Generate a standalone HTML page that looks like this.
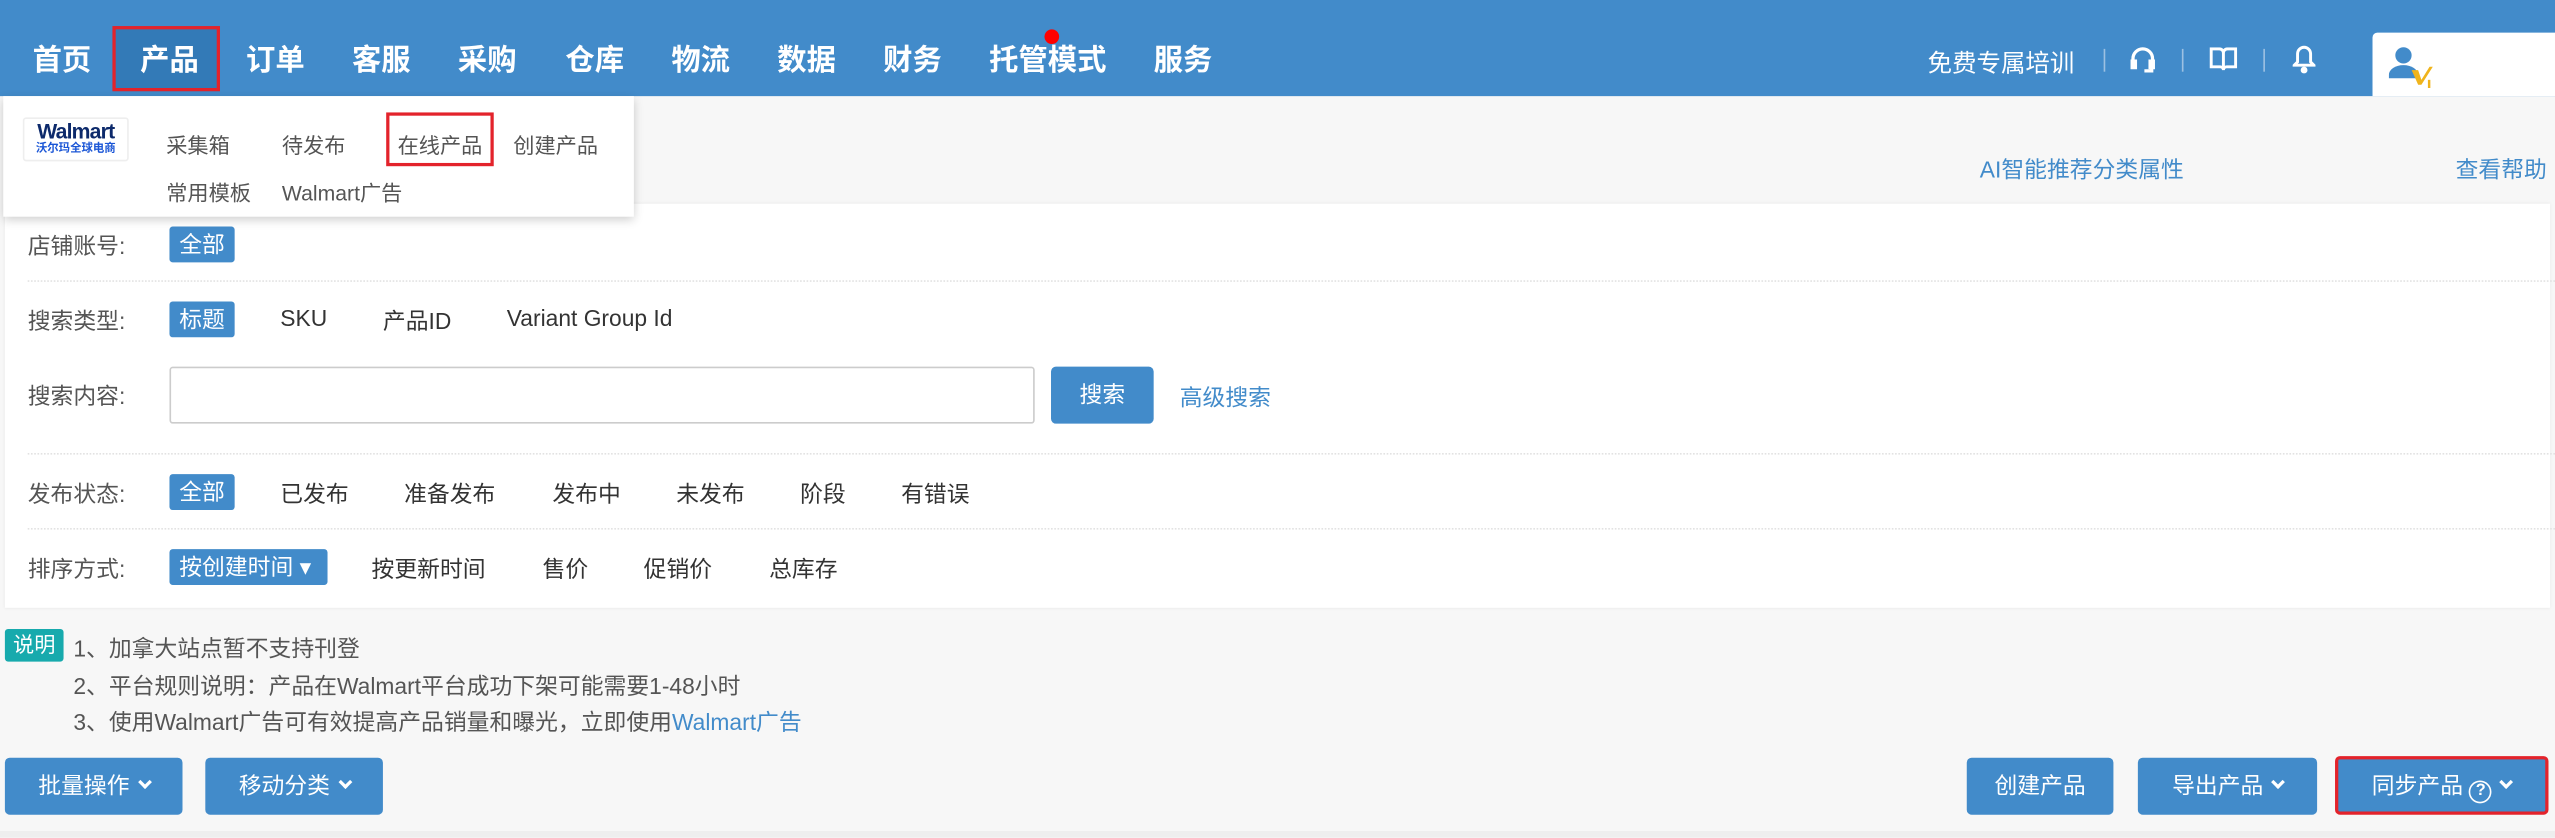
<!DOCTYPE html>
<html><head><meta charset="utf-8"><style>
*{margin:0;padding:0;box-sizing:border-box}
html,body{width:2555px;height:838px;overflow:hidden;background:#f7f7f7}
#w{position:absolute;left:0;top:0;width:1568px;height:514px;transform:scale(1.62947);transform-origin:0 0;font-family:"Liberation Sans","Noto Sans CJK SC",sans-serif;color:#555;font-size:14px}
.a{position:absolute;white-space:nowrap}
#nav{position:absolute;left:0;top:0;width:1568px;height:59px;background:#428bca}
.n{position:absolute;top:25px;color:#fff;font-size:18px;font-weight:bold;line-height:24px}
.tag{position:absolute;background:#428bca;color:#fff;border-radius:2px;height:22px;line-height:22px;padding:0 6px;font-size:14px}
.lbl{position:absolute;left:17px;font-size:14px;color:#555}
.dv{position:absolute;left:17px;right:0;border-top:1px dotted #e2e2e2}
.btn{position:absolute;background:#428bca;color:#fff;border-radius:3px;height:35px;line-height:35px;text-align:center;font-size:14px}
.chev{display:inline-block;width:6px;height:6px;border-right:2px solid #fff;border-bottom:2px solid #fff;transform:rotate(45deg);margin-left:6px;vertical-align:4px}
</style></head><body><div id="w">
<div id="nav">
<div class="n" style="left:20px">首页</div>
<div class="a" style="left:69px;top:16px;width:66px;height:40px;background:#337ab7;border:2px solid #e3232b"></div>
<div class="n" style="left:86px">产品</div>
<div class="n" style="left:151px">订单</div>
<div class="n" style="left:216px">客服</div>
<div class="n" style="left:281px">采购</div>
<div class="n" style="left:347px">仓库</div>
<div class="n" style="left:412px">物流</div>
<div class="n" style="left:477px">数据</div>
<div class="n" style="left:542px">财务</div>
<div class="n" style="left:607px">托管模式</div>
<div class="a" style="left:641px;top:18px;width:9px;height:9px;border-radius:50%;background:#f00"></div>
<div class="n" style="left:708px">服务</div>
<div class="a" style="left:1183px;top:28px;color:#fff;font-size:15px">免费专属培训</div>
<div class="a" style="left:1291px;top:30px;width:1px;height:14px;background:#9cc0e2"></div>
<div class="a" style="left:1339px;top:30px;width:1px;height:14px;background:#9cc0e2"></div>
<div class="a" style="left:1389px;top:30px;width:1px;height:14px;background:#9cc0e2"></div>
<svg class="a" style="left:1307px;top:28px" width="16" height="18" viewBox="0 0 16 18" fill="none" stroke="#fff" stroke-width="2"><path d="M2 10V8a6 6 0 0 1 12 0v2"/><rect x="1.5" y="9.5" width="2" height="4" fill="#fff"/><rect x="12.5" y="9.5" width="2" height="4" fill="#fff"/><path d="M13.5 14v1.5H9"/></svg>
<svg class="a" style="left:1356px;top:29px" width="17" height="15" viewBox="0 0 17 15" fill="none" stroke="#fff" stroke-width="1.8"><path d="M1 1h5a2.5 2.5 0 0 1 2.5 2.5V14a2 2 0 0 0-2-2H1zM16 1h-5a2.5 2.5 0 0 0-2.5 2.5V14a2 2 0 0 1 2-2H16z"/></svg>
<svg class="a" style="left:1407px;top:27px" width="14" height="18" viewBox="0 0 14 18" fill="none" stroke="#fff" stroke-width="1.8"><path d="M7 2a4 4 0 0 1 4 4v5l2 2H1l2-2V6a4 4 0 0 1 4-4z"/><circle cx="7" cy="16" r="1.2" fill="#fff"/></svg>
<div class="a" style="left:1456px;top:20px;width:112px;height:39px;background:#fff;border-radius:3px 0 0 0"></div>
<svg class="a" style="left:1466px;top:27px" width="30" height="28" viewBox="0 0 30 28"><circle cx="9" cy="7" r="5" fill="#428bca"/><path d="M0 19a9 6 0 0 1 18 0v2H0z" fill="#428bca"/><path d="M14 16l4 0 2 6 5-8h2l-7 11h-2z" fill="#f0b41c"/><rect x="24" y="22" width="1.5" height="5" fill="#f0b41c"/></svg>
</div>
<!-- right links -->
<div class="a" style="left:1215px;top:94px;color:#428bca;font-size:14px">AI智能推荐分类属性</div>
<div class="a" style="left:1507px;top:94px;color:#428bca;font-size:14px">查看帮助</div>
<!-- filter panel -->
<div class="a" style="left:3px;top:125px;width:1562px;height:248px;background:#fff;box-shadow:0 0 2px rgba(0,0,0,.08)">
</div>
<div class="lbl" style="top:141px">店铺账号:</div>
<div class="tag" style="left:104px;top:139px">全部</div>
<div class="dv" style="top:172px"></div>
<div class="lbl" style="top:187px">搜索类型:</div>
<div class="tag" style="left:104px;top:185px">标题</div>
<div class="a" style="left:172px;top:187px;color:#333">SKU</div>
<div class="a" style="left:235px;top:187px;color:#333">产品ID</div>
<div class="a" style="left:311px;top:187px;color:#333">Variant Group Id</div>
<div class="lbl" style="top:233px">搜索内容:</div>
<div class="a" style="left:104px;top:225px;width:531px;height:35px;border:1px solid #ccc;border-radius:2px;background:#fff"></div>
<div class="btn" style="left:645px;top:225px;width:63px">搜索</div>
<div class="a" style="left:724px;top:234px;color:#428bca">高级搜索</div>
<div class="dv" style="top:278px"></div>
<div class="lbl" style="top:293px">发布状态:</div>
<div class="tag" style="left:104px;top:291px">全部</div>
<div class="a" style="left:172px;top:293px;color:#333">已发布</div>
<div class="a" style="left:248px;top:293px;color:#333">准备发布</div>
<div class="a" style="left:339px;top:293px;color:#333">发布中</div>
<div class="a" style="left:415px;top:293px;color:#333">未发布</div>
<div class="a" style="left:491px;top:293px;color:#333">阶段</div>
<div class="a" style="left:553px;top:293px;color:#333">有错误</div>
<div class="dv" style="top:324px"></div>
<div class="lbl" style="top:339px">排序方式:</div>
<div class="tag" style="left:104px;top:337px;width:97px">按创建时间 ▾</div>
<div class="a" style="left:228px;top:339px;color:#333">按更新时间</div>
<div class="a" style="left:333px;top:339px;color:#333">售价</div>
<div class="a" style="left:395px;top:339px;color:#333">促销价</div>
<div class="a" style="left:472px;top:339px;color:#333">总库存</div>
<!-- dropdown -->
<div class="a" style="left:2px;top:59px;width:387px;height:74px;background:#fff;box-shadow:0 2px 6px rgba(0,0,0,.2)"></div>
<div class="a" style="left:14px;top:72px;width:65px;height:27px;border:1px solid #eee;border-radius:2px;background:#fff;text-align:center;line-height:11px">
<div style="font-weight:bold;color:#0d2a6b;font-size:13px;margin-top:2px;letter-spacing:-.5px">Walmart</div><div style="color:#1b56d6;font-size:7px;font-weight:bold">沃尔玛全球电商</div></div>
<div class="a" style="left:102px;top:79px;font-size:13px">采集箱</div>
<div class="a" style="left:173px;top:79px;font-size:13px">待发布</div>
<div class="a" style="left:237px;top:69px;width:66px;height:33px;border:2px solid #e3232b"></div>
<div class="a" style="left:244px;top:79px;font-size:13px">在线产品</div>
<div class="a" style="left:315px;top:79px;font-size:13px">创建产品</div>
<div class="a" style="left:102px;top:108px;font-size:13px">常用模板</div>
<div class="a" style="left:173px;top:108px;font-size:13px">Walmart广告</div>
<!-- notes -->
<div class="a" style="left:3px;top:386px;width:36px;height:20px;background:#17aaad;color:#fff;border-radius:2px;text-align:center;line-height:20px;font-size:13px">说明</div>
<div class="a" style="left:45px;top:388px">1、加拿大站点暂不支持刊登</div>
<div class="a" style="left:45px;top:411px">2、平台规则说明：产品在Walmart平台成功下架可能需要1-48小时</div>
<div class="a" style="left:45px;top:433px">3、使用Walmart广告可有效提高产品销量和曝光，立即使用<span style="color:#428bca">Walmart广告</span></div>
<!-- buttons -->
<div class="btn" style="left:3px;top:465px;width:109px">批量操作<span class="chev"></span></div>
<div class="btn" style="left:126px;top:465px;width:109px">移动分类<span class="chev"></span></div>
<div class="btn" style="left:1207px;top:465px;width:90px">创建产品</div>
<div class="btn" style="left:1312px;top:465px;width:110px">导出产品<span class="chev"></span></div>
<div class="btn" style="left:1433px;top:464px;width:131px;height:36px;border:2px solid #e3232b;line-height:32px">同步产品 <span style="display:inline-block;width:14px;height:14px;border:1.5px solid #fff;border-radius:50%;font-size:10px;line-height:11px;font-weight:bold;vertical-align:-1px">?</span><span class="chev"></span></div>
<div class="a" style="left:0;top:510px;width:1568px;height:4px;background:#eee"></div>
</div></body></html>
